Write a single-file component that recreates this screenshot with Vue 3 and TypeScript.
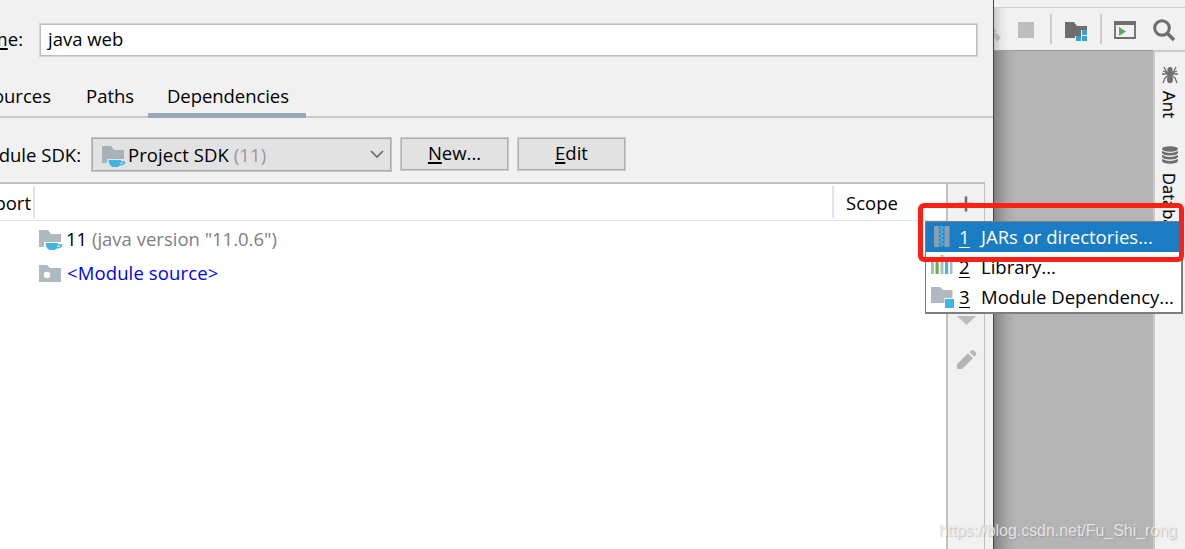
<script setup lang="ts">
interface MenuItem { key: string; label: string; icon: 'jar' | 'library' | 'module' }

const tabs = [
  { label: 'Sources', cls: 'sources' },
  { label: 'Paths', cls: 'paths' },
  { label: 'Dependencies', cls: 'deps active' },
]
const items: MenuItem[] = [
  { key: '1', label: 'JARs or directories...', icon: 'jar' },
  { key: '2', label: 'Library...', icon: 'library' },
  { key: '3', label: 'Module Dependency...', icon: 'module' },
]
</script>

<template>
  <div class="screen">
    <section class="dialog">
      <div class="name-row">
        <label class="clip name-label"><span>Na<u>m</u>e:</span></label>
        <div class="input"><span>java web</span></div>
      </div>
      <nav class="tabs">
        <div v-for="t in tabs" :key="t.label" class="tab" :class="t.cls"><span>{{ t.label }}</span></div>
      </nav>
      <div class="sdk-row">
        <label class="clip sdk-label"><span>Module SDK:</span></label>
        <div class="select">
          <svg class="sdk-icon" width="24" height="22" viewBox="0 0 24 22">
            <path d="M0 0h9l3 4h10v9H5v4H0z" fill="#a7b1b8" />
            <path d="M6.500 14h12.500v1.200h4q1 4-5 4.300-2 1.500-3 1.500h-4q-4-1-4.500-7z" fill="#42b4e0" />
            <path d="M18.500 16.800h3q-.5 1.200-3.200 1.200z" fill="#e2e2e2" />
          </svg>
          <span class="sdk-name">Project SDK <i>(11)</i></span>
          <svg class="chev" width="14" height="9" viewBox="0 0 14 9"><path d="M1 1l6 6 6-6" fill="none" stroke="#6a6a6a" stroke-width="1.700" /></svg>
        </div>
        <button class="btn"><span><u>N</u>ew...</span></button>
        <button class="btn edit"><span><u>E</u>dit</span></button>
      </div>
      <div class="panel">
        <div class="table">
          <div class="thead">
            <div class="th export"><span>Export</span></div>
            <div class="th blank"></div>
            <div class="th scope"><span>Scope</span></div>
          </div>
          <div class="row">
            <svg width="24" height="22" viewBox="0 0 24 22">
              <path d="M0 1h9l3 4h10v8H5v5H0z" fill="#afb9c0" />
              <path d="M6.500 14h12.500v1.200h4q1 4-5 4.300-2 1.500-3 1.500h-4q-4-1-4.500-7z" fill="#42b4e0" />
              <path d="M18.500 16.800h3q-.5 1.200-3.200 1.200z" fill="#fff" />
            </svg>
            <span class="jdk">11 <i>(java version "11.0.6")</i></span>
          </div>
          <div class="row second">
            <svg width="24" height="22" viewBox="0 0 24 22">
              <path d="M0 2h8l3 3h11v14H0z" fill="#afb9c0" /><circle cx="8" cy="12" r="3.200" fill="#fff" />
            </svg>
            <span class="source">&lt;Module source&gt;</span>
          </div>
        </div>
        <div class="actions">
          <svg width="36" height="200" viewBox="0 0 36 200">
            <path d="M18 12.500v15M10.500 20h15" stroke="#707070" stroke-width="2.600" />
            <path d="M9 132h19l-9.500 9z" fill="#bcbcbc" />
            <path d="M9 185v-4.800l11-11 5 5L14 185zM21.500 168l1.700-1.500q1.500-1 3 .3l1.700 1.700q1 1.500 0 2.600l-1.700 1.700z" fill="#b5b5b5" />
          </svg>
        </div>
      </div>
    </section>

    <section class="ide">
      <div class="top-line"></div>
      <div class="toolbar">
        <svg width="192" height="42" viewBox="0 0 192 42">
          <path d="M1 19l3 5H1zM1 24l5 3v3H1zM1 29h7l-4 5z" fill="#b4b4b4" />
          <rect x="25" y="14" width="16" height="16" fill="#bebebe" />
          <path d="M58 6v30M108 6v30" stroke="#cdcdcd" stroke-width="2" />
          <path d="M72 14h9l3 4h10v4H88v6H82v2H72z" fill="#6e6e6e" />
          <path d="M89 22h5v5h-5zM83 28h5v5h-5zM89 28h5v5h-5z" fill="#389fd6" />
          <path d="M122 14h20v16H122z" fill="none" stroke="#6e6e6e" stroke-width="1.800" />
          <path d="M121 13h22v4H121z" fill="#6e6e6e" /><path d="M126 19l7 4.500-7 4.500z" fill="#59a869" />
          <circle cx="169" cy="20" r="7.300" fill="none" stroke="#6e6e6e" stroke-width="3" />
          <path d="M174.500 25.500l6.500 6.500" stroke="#6e6e6e" stroke-width="3.600" />
        </svg>
      </div>
      <div class="body">
        <div class="canvas"></div>
        <aside class="stripe">
          <svg class="ant" width="18" height="18" viewBox="0 0 18 18">
            <g fill="#6e6e6e"><circle cx="9" cy="3.500" r="2.600" /><circle cx="9" cy="8" r="2.400" /><ellipse cx="9" cy="13.500" rx="3" ry="3.800" /></g>
            <path d="M3 1l2 4 4 3 4-3 2-4M1 8h16M2 17l2-5 5-4 5 4 2 5M2 5l7 3 7-3" fill="none" stroke="#6e6e6e" stroke-width="1.300" />
          </svg>
          <span class="vert ant-text">Ant</span>
          <svg class="db" width="16" height="18" viewBox="0 0 16 18">
            <ellipse cx="8" cy="3" rx="8" ry="2.700" fill="#6e6e6e" />
            <path d="M0 5q8 4 16 0v2q-1 2.500-8 2.500T0 7zM0 9q8 4 16 0v2q-1 2.500-8 2.500T0 11zM0 13q8 4 16 0v2q-1 2.700-8 2.700T0 15z" fill="#6e6e6e" />
          </svg>
          <span class="vert db-text">Database</span>
        </aside>
      </div>
    </section>

    <div class="menu">
      <div v-for="it in items" :key="it.key" class="item" :class="it.icon">
        <svg v-if="it.icon === 'jar'" width="24" height="24" viewBox="0 0 24 24">
          <path d="M3 1h5.500v21H3zM13 1h5.500v21H13z" fill="#8c9eae" /><path d="M8 1h5.500v21H8z" fill="#2889c4" />
          <path d="M9 1l3 2-3 2 3 2-3 2 3 2-3 2 3 2-3 2 3 2-3 2" fill="none" stroke="#49b5e8" stroke-width="1.400" />
        </svg>
        <svg v-else-if="it.icon === 'library'" width="24" height="24" viewBox="0 0 24 24">
          <path d="M0 4h3v15H0zM9.500 0h3v19h-3zM19 2h2.500v17H19z" fill="#afb9c0" />
          <path d="M4.500 2h3.200v17H4.500z" fill="#62b543" /><path d="M14 4h3.200v15H14z" fill="#40b6e0" />
        </svg>
        <svg v-else width="24" height="24" viewBox="0 0 24 24">
          <path d="M0 2h9l3 3h9.500v8h-8v5H0z" fill="#afb9c0" /><path d="M14 14h9v9h-9z" fill="#40b6e0" />
        </svg>
        <span class="key">{{ it.key }}</span>
        <span class="label">{{ it.label }}</span>
      </div>
    </div>
    <div class="highlight"></div>
    <div class="watermark">https://blog.csdn.net/Fu_Shi_rong</div>
  </div>
</template>

<style>
body { margin: 0; overflow: hidden; }
</style>

<style scoped>
* { box-sizing: border-box; }
.screen { position: relative; width: 1185px; height: 549px; display: grid; grid-template-columns: 994px 191px; overflow: hidden; background: #f1f1f1; color: #000; font: 18.5px/24px "Open Sans", "Noto Sans", sans-serif; }
span { white-space: pre; }
i { font-style: normal; }
u { text-decoration-thickness: 1.5px; text-underline-offset: 2px; }
svg { display: block; flex: none; }
.dialog { display: flex; flex-direction: column; height: 549px; padding-top: 23px; border-right: 1px solid #444; background: #f1f1f1; overflow: hidden; }
.clip { display: flex; justify-content: flex-end; overflow: hidden; }
.name-row { display: flex; height: 34px; align-items: center; }
.name-label { width: 23px; margin-right: 16px; padding-bottom: 2px; }
.input { width: 939px; height: 34px; border: 1px solid #d4d4d4; box-shadow: inset 0 0 0 1px #bdbdbd; background: #fff; padding: 3px 8px; }
.tabs { display: flex; height: 61px; padding-top: 21px; border-bottom: 2px solid #c9c9c9; }
.tab { height: 40px; padding-top: 6px; }
.sources { width: 69px; display: flex; justify-content: flex-end; padding-right: 18px; overflow: hidden; }
.paths { width: 79px; padding-left: 17px; }
.deps { width: 158px; padding-left: 19px; letter-spacing: -.06px; }
.active { border-bottom: 5px solid #9ba8b8; }
.sdk-row { display: flex; height: 64px; padding-top: 19px; }
.sdk-label { width: 81px; margin-right: 10px; padding-top: 6px; height: 34px; }
.select { width: 301px; height: 35px; display: flex; align-items: center; border: 1px solid #c4c4c4; box-shadow: inset 0 0 0 1px #aaa; background: #e2e2e2; padding: 0 7px 0 10px; }
.sdk-icon { margin-top: 5px; }
.sdk-name { margin-left: 2px; flex: 1; letter-spacing: .08px; }
.sdk-name i { color: #999; }
.btn { width: 109px; height: 34px; margin-left: 8px; padding: 0 0 2px; border: 1px solid #cbcbcb; box-shadow: inset 0 0 0 1px #adadad; background: #e2e2e2; font: inherit; color: inherit; }
.panel { width: 985px; flex: 1; display: flex; border-top: 2px solid #c0c0c0; }
.table { width: 946px; background: #fff; }
.thead { display: flex; height: 37px; padding: 2px 0; border-bottom: 1px solid #e3e3e3; }
.th { border-right: 2px solid #e2e2e2; padding-top: 5px; height: 32px; }
.export { width: 35px; display: flex; justify-content: flex-end; padding-right: 2px; overflow: hidden; }
.blank { width: 799px; }
.scope { border: 0; padding-left: 12px; }
.row { height: 34px; padding: 1px 0 0 39px; display: flex; align-items: center; }
.row svg { margin-top: 3px; }
.jdk { margin-left: 3px; }
.jdk i { color: #808080; }
.source { margin-left: 4px; color: #00f; letter-spacing: .12px; }
.second svg { margin-top: 2px; }
.actions { width: 39px; border-left: 2px solid #c0c0c0; border-right: 1px solid #c0c0c0; background: #f1f1f1; }
.ide { display: flex; flex-direction: column; height: 549px; background: #f1f1f1; overflow: hidden; }
.top-line { height: 8px; border-bottom: 1px solid #cfcfcf; flex: none; }
.toolbar { height: 42px; flex: none; background: linear-gradient(90deg, #c8c8c8, #e6e6e6 7px, #f1f1f1 15px); }
.toolbar svg { margin-left: -1px; }
.body { display: flex; flex: 1; min-height: 0; }
.canvas { width: 159px; border-top: 1px solid #999; background: linear-gradient(90deg, #808080, #989898 7px, #aaa 14px, #b4b4b4 22px); }
.stripe { width: 32px; border-top: 2px solid #c9c9c9; border-left: 2px solid #c9c9c9; display: flex; flex-direction: column; align-items: center; padding-top: 14px; overflow: hidden; }
.vert { writing-mode: vertical-rl; font-size: 16.5px; line-height: 22px; margin-left: -3px; flex: none; -webkit-text-stroke: .2px #000; }
.ant-text { margin-top: 7px; height: 36px; letter-spacing: .3px; }
.db { margin-top: 19px; }
.db-text { margin-top: 9px; }
.menu { position: absolute; left: 925px; top: 221px; width: 258px; height: 93px; border: solid #7e7e7e; border-width: 1px 2px 2px 1px; background: #fff; }
.item { height: 30px; display: flex; align-items: center; padding-left: 5px; }
.jar { background: #1a7cc2; color: #fff; }
.item svg { margin-right: 4px; }
.key { width: 11px; height: 22px; line-height: 22px; border-bottom: 1px solid currentColor; margin-right: 11px; }
.highlight { position: absolute; left: 918px; top: 203px; width: 266px; height: 59px; border: 5px solid #ff2015; border-radius: 6px; }
.watermark { position: absolute; left: 939px; top: 520px; font: 16px/22px "Liberation Sans", sans-serif; letter-spacing: -.04px; color: rgba(235, 235, 235, .9); text-shadow: 1px 1px 1px rgba(110, 110, 110, .35); white-space: nowrap; }
</style>
